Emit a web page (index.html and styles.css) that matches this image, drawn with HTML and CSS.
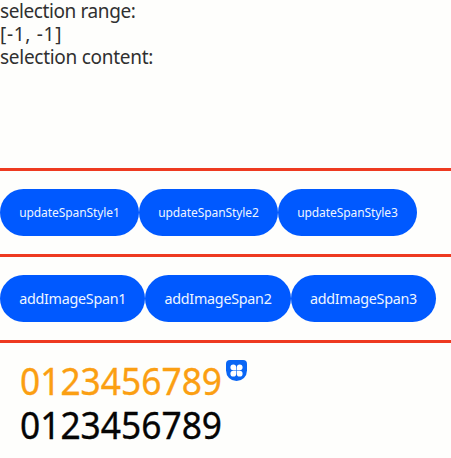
FILE: index.html
```html
<!DOCTYPE html>
<html lang="en">
<head>
<meta charset="utf-8">
<title>Rich editor</title>
<link rel="stylesheet" href="styles.css">
</head>
<body>
<main class="page">
  <section class="status">
    <div><span class="range">selection range:</span></div>
    <div><span class="value">[-1, -1]</span></div>
    <div><span class="content">selection content:</span></div>
  </section>
  <section class="actions small">
    <button><span>updateSpanStyle1</span></button>
    <button><span>updateSpanStyle2</span></button>
    <button><span>updateSpanStyle3</span></button>
  </section>
  <section class="actions large">
    <button><span>addImageSpan1</span></button>
    <button><span>addImageSpan2</span></button>
    <button><span>addImageSpan3</span></button>
  </section>
  <section class="editor">
    <div class="line orange"><span class="digits">0123456789</span>
      <svg class="icon" viewBox="0 0 21 21" aria-hidden="true">
        <path fill="#0a66f5" d="M4 0H17Q21 0 21 4V10.5A10.5 10.5 0 0 1 0 10.5V4Q0 0 4 0Z"/>
        <g fill="#fff">
          <path d="M10.2 10.2H7.3A2.9 2.9 0 1 1 10.2 7.3Z"/>
          <path d="M10.8 10.2V7.3A2.9 2.9 0 1 1 13.7 10.2Z"/>
          <path d="M10.2 10.8V13.7A2.9 2.9 0 1 1 7.3 10.8Z"/>
          <path d="M10.8 10.8H13.7A2.9 2.9 0 1 1 10.8 13.7Z"/>
        </g>
      </svg>
    </div>
    <div class="line"><span class="digits">0123456789</span></div>
  </section>
</main>
</body>
</html>
```
FILE: styles.css
```css
* { box-sizing: border-box; }
body {
  margin: 0;
  background: #fefefc;
  font-family: "Noto Sans", "Open Sans", sans-serif;
  color: #303030;
  overflow: hidden;
}
.page { height: 458px; display: flex; flex-direction: column; }
.status {
  height: 171px;
  border-bottom: 3px solid #ee3a20;
  font-size: 19px;
  line-height: 23.2px;
  white-space: nowrap;
}
.range { letter-spacing: -0.4px; }
.content { letter-spacing: -0.28px; }
.value { letter-spacing: 0.7px; }
.actions {
  height: 86px;
  border-bottom: 3px solid #ee3a20;
  display: flex;
  align-items: center;
}
button {
  height: 47.5px;
  padding: 0;
  border: 0;
  border-radius: 24px;
  background: #0059ff;
  color: #eef5ff;
  font-family: inherit;
  white-space: nowrap;
}
.small button { width: 139px; font-size: 12px; letter-spacing: -0.08px; }
.large button { width: 145.4px; font-size: 14.3px; letter-spacing: -0.25px; }
.editor { padding: 16px 20px 0; }
.line {
  display: flex;
  height: 44px;
  line-height: 44px;
  font-size: 37.5px;
  color: #050505;
}
.digits {
  width: 201px;
  white-space: nowrap;
  transform: scaleX(0.942);
  transform-origin: 0 50%;
  -webkit-text-stroke: 0.35px currentColor;
}
.orange { color: #fb9f12; }
.icon { width: 21px; height: 21px; margin: 1px 0 0 5px; }
```
